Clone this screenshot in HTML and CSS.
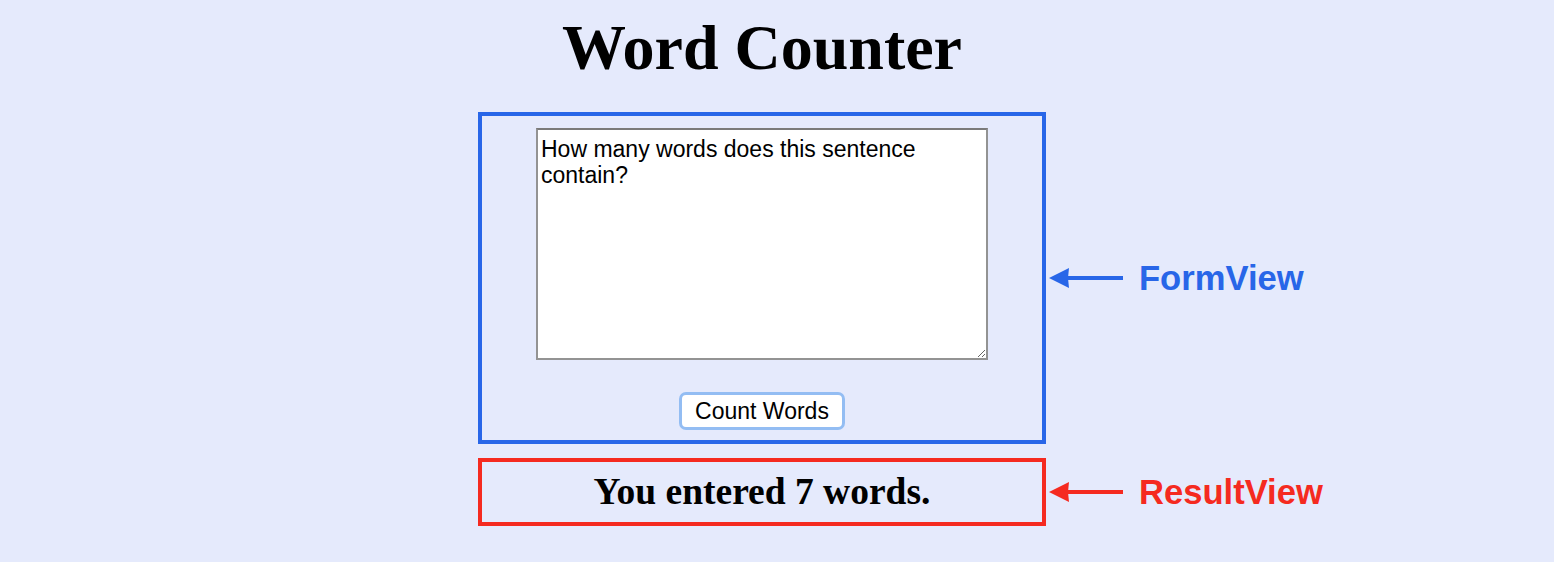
FILE: index.html
```html
<!DOCTYPE html>
<html lang="en">
<head>
<meta charset="utf-8">
<title>Word Counter</title>
<link rel="stylesheet" href="styles.css">
</head>
<body>
<main class="page">
  <h1 class="title">Word Counter</h1>
  <div class="row">
    <form class="form-view">
      <textarea class="input">How many words does this sentence contain?</textarea>
      <button type="button" class="count-btn">Count Words</button>
    </form>
    <div class="note note-blue">
      <svg class="arrow" width="75" height="20" viewBox="0 0 75 20"><polygon points="0,10 20,0 19,10 20,20" fill="currentColor"/><rect x="18" y="8" width="56" height="4" fill="currentColor"/></svg>
      <span class="label">FormView</span>
    </div>
  </div>
  <div class="row">
    <section class="result-view">
      <h2 class="result">You entered 7 words.</h2>
    </section>
    <div class="note note-red">
      <svg class="arrow" width="75" height="20" viewBox="0 0 75 20"><polygon points="0,10 20,0 19,10 20,20" fill="currentColor"/><rect x="18" y="8" width="56" height="4" fill="currentColor"/></svg>
      <span class="label">ResultView</span>
    </div>
  </div>
</main>
</body>
</html>
```
FILE: styles.css
```css
html, body {
  margin: 0;
  padding: 0;
  background: #e5eafc;
}
.page {
  padding-left: 478px;
  display: flex;
  flex-direction: column;
}
.title {
  width: 568px;
  margin: 11px 0 27px;
  font-family: "Liberation Serif", "Times New Roman", serif;
  font-weight: bold;
  font-size: 64px;
  line-height: 74px;
  text-align: center;
  color: #000;
}
.row {
  display: flex;
  align-items: center;
  gap: 3px;
}
.row + .row {
  margin-top: 14px;
}
.form-view {
  box-sizing: border-box;
  width: 568px;
  height: 332px;
  margin: 0;
  border: 4px solid #2866e8;
  padding: 12px 0 0;
  display: flex;
  flex-direction: column;
  align-items: center;
}
.input {
  box-sizing: border-box;
  width: 452px;
  height: 232px;
  margin: 0;
  border: 2px solid #939393;
  border-top-color: #7a7a7a;
  padding: 6px 3px;
  background: #fff;
  font-family: "Liberation Sans", Arial, sans-serif;
  font-size: 23px;
  line-height: 26px;
  color: #000;
}
.count-btn {
  box-sizing: border-box;
  margin-top: 32px;
  width: 166px;
  height: 38px;
  border: 3px solid #93bdf3;
  border-radius: 7px;
  background: #fff;
  padding: 0;
  font-family: "Liberation Sans", Arial, sans-serif;
  font-size: 23px;
  color: #000;
}
.result-view {
  box-sizing: border-box;
  width: 568px;
  height: 68px;
  border: 4px solid #f52a20;
  display: flex;
  align-items: center;
  justify-content: center;
}
.result {
  margin: 0;
  font-family: "Liberation Serif", "Times New Roman", serif;
  font-weight: bold;
  font-size: 37.5px;
  line-height: 42px;
  color: #000;
}
.note {
  display: flex;
  align-items: center;
  gap: 15px;
}
.arrow {
  display: block;
}
.label {
  font-family: "Liberation Sans", Arial, sans-serif;
  font-weight: bold;
  font-size: 34.6px;
}
.note-blue { color: #2866e8; }
.note-red { color: #f52a20; }
```
